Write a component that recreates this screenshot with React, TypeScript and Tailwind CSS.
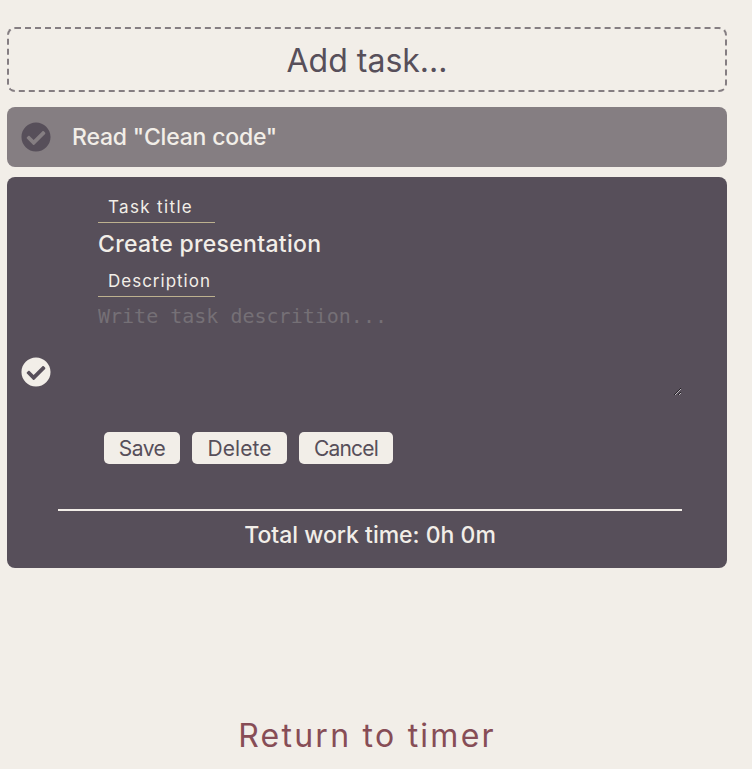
import { FaCheckCircle } from "react-icons/fa";

function ActionButton({ label, className }: { label: string; className: string }) {
  return (
    <button className={`h-8 rounded-[5px] bg-[#f2eee8] pt-px text-center text-[21px] leading-8 whitespace-nowrap text-[#574f5a] ${className}`}>
      {label}
    </button>
  );
}

function FieldLabel({ label, className }: { label: string; className: string }) {
  return (
    <label className={`block w-[117px] border-b border-[#bdb18f] pl-2.5 text-[17px] whitespace-nowrap ${className}`}>{label}</label>
  );
}

export default function App() {
  return (
    <main className="h-[769px] overflow-hidden bg-[#f2eee8] pt-[27px] pl-[7px] font-['Inter','Noto_Sans',sans-serif] text-[#f2eee8]">
      <div className="w-[720px]">
        <button className="block h-[65px] w-full rounded-lg border-2 border-dashed border-[#857e82] text-[32px] leading-[64px] text-[#574f5a]">
          Add task...
        </button>

        <section className="mt-[15px] flex h-[60px] items-center rounded-lg bg-[#857e82] pl-3.5">
          <FaCheckCircle className="size-[30px] text-[#574f5a]" />
          <span className="ml-[21px] text-[23px] leading-[30px] font-medium tracking-[-0.2px] whitespace-nowrap">Read "Clean code"</span>
        </section>

        <section className="mt-2.5 flex h-[391px] items-center rounded-lg bg-[#574f5a] pl-3.5">
          <FaCheckCircle className="mb-0.5 size-[30px]" />
          <div className="ml-[7px] flex h-full w-[624px] flex-col">
            <form className="flex flex-col pl-10">
              <FieldLabel label="Task title" className="mt-4 h-[30px] leading-7 tracking-[1.35px]" />
              <input
                className="h-[43px] w-full pb-0.5 text-[23px] font-medium tracking-[0.3px] outline-none"
                defaultValue="Create presentation"
              />
              <FieldLabel label="Description" className="h-[31px] leading-[31px] tracking-[1px]" />
              <textarea
                className="h-[99px] w-full resize py-[7px] font-['DejaVu_Sans_Mono',monospace] text-[20px] leading-6 outline-none placeholder:text-[#757076]"
                placeholder="Write task descrition..."
              />
              <div className="mt-9 flex gap-3 pl-1.5">
                <ActionButton label="Save" className="w-[76px] tracking-[-0.5px]" />
                <ActionButton label="Delete" className="w-[95px] tracking-[0.1px]" />
                <ActionButton label="Cancel" className="w-[94px] tracking-[-0.8px]" />
              </div>
            </form>
            <p className="mt-[45px] border-t-2 border-[#f2eee8] text-center text-[23px] leading-[48px] font-medium whitespace-nowrap">
              Total work time: 0h 0m
            </p>
          </div>
        </section>

        <a className="mt-36 block text-center text-[32px] leading-[48px] tracking-[2.25px] text-[#874d56]">Return to timer</a>
      </div>
    </main>
  );
}
